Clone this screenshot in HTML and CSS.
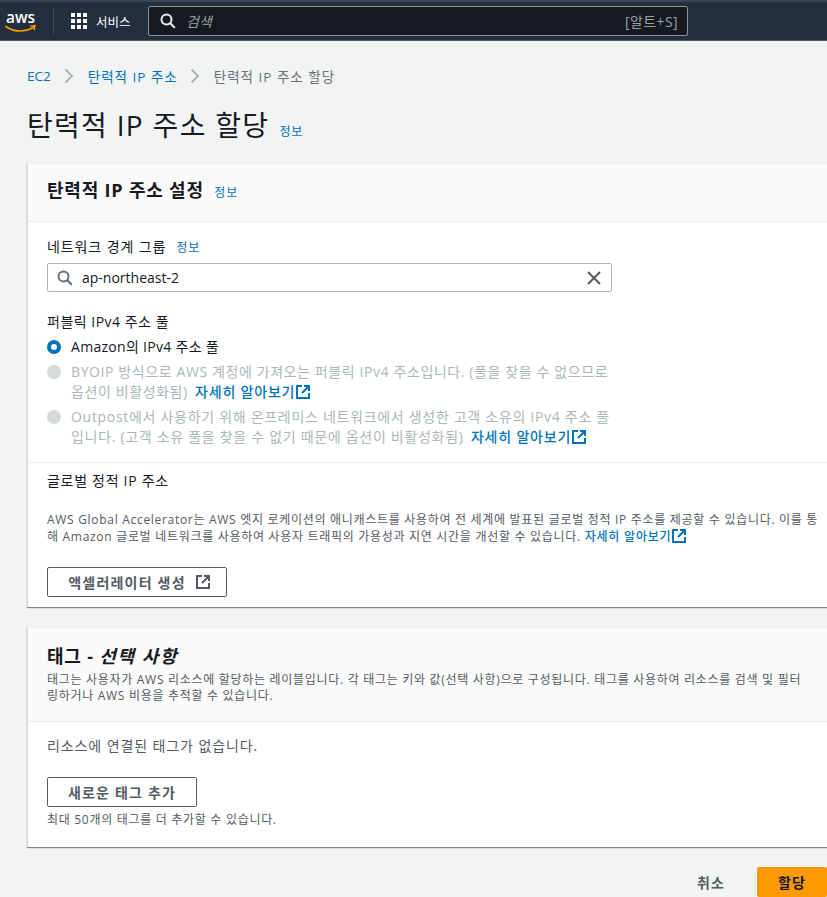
FILE: index.html
```html
<!DOCTYPE html>
<html lang="ko">
<head>
<meta charset="utf-8">
<title>탄력적 IP 주소 할당</title>
<link rel="stylesheet" href="styles.css">
</head>
<body>
<header class="topbar">
  <svg class="logo" width="33" height="34" viewBox="0 -4 33 34">
    <text x="1" y="15" class="logo-text" textLength="29" lengthAdjust="spacingAndGlyphs">aws</text>
    <path d="M1 18.500c4 3 9 4.500 14 4.500 4 0 9-1 13-3.400" fill="none" stroke="#ff9900" stroke-width="1.700" stroke-linecap="round"/>
    <path d="M25.500 18.300l4.500-.6-1 4.300" fill="none" stroke="#ff9900" stroke-width="1.500"/>
  </svg>
  <span class="topbar-sep"></span>
  <svg class="grid-icon" width="16" height="16" viewBox="0 0 16 16" fill="#fff">
    <rect width="4" height="4"/><rect x="6" width="4" height="4"/><rect x="12" width="4" height="4"/>
    <rect y="6" width="4" height="4"/><rect x="6" y="6" width="4" height="4"/><rect x="12" y="6" width="4" height="4"/>
    <rect y="12" width="4" height="4"/><rect x="6" y="12" width="4" height="4"/><rect x="12" y="12" width="4" height="4"/>
  </svg>
  <span class="services">서비스</span>
  <div class="search">
    <svg width="16" height="16" viewBox="0 0 16 16" fill="none" stroke="#eaeded" stroke-width="2"><circle cx="6.500" cy="6.500" r="5"/><path d="M10.200 10.200l4.600 4.600"/></svg>
    <span class="search-ph">검색</span>
    <span class="search-key">[알트+S]</span>
  </div>
</header>

<main class="page">
  <nav class="crumbs">
    <a class="link crumb-root">EC2</a>
    <svg class="crumb-sep" width="10" height="16" viewBox="0 0 10 16"><path d="M1.500 1.500L8 8l-6.500 6.500" fill="none" stroke="#aab7b8" stroke-width="2"/></svg>
    <a class="link">탄력적 IP 주소</a>
    <svg class="crumb-sep" width="10" height="16" viewBox="0 0 10 16"><path d="M1.500 1.500L8 8l-6.500 6.500" fill="none" stroke="#aab7b8" stroke-width="2"/></svg>
    <span class="crumb-current">탄력적 IP 주소 할당</span>
  </nav>

  <div class="title-row">
    <h1>탄력적 IP 주소 할당</h1>
    <a class="info">정보</a>
  </div>

  <section class="card">
    <div class="card-head">
      <h2>탄력적 IP 주소 설정 <a class="info info-h2">정보</a></h2>
    </div>
    <div class="card-body">
      <div class="label-row"><span class="label">네트워크 경계 그룹</span><a class="info">정보</a></div>
      <div class="input">
        <svg width="16" height="16" viewBox="0 0 16 16" fill="none" stroke="#687078" stroke-width="2"><circle cx="6.500" cy="6.500" r="5"/><path d="M10.200 10.200l4.600 4.600"/></svg>
        <span class="input-value">ap-northeast-2</span>
        <svg class="clear" width="16" height="16" viewBox="0 0 16 16" fill="none" stroke="#545b64" stroke-width="2"><path d="M2 2l12 12M14 2L2 14"/></svg>
      </div>
      <div class="label pool-label">퍼블릭 IPv4 주소 풀</div>
      <div class="radio">
        <span class="dot dot-on"></span>
        <span class="radio-text">Amazon의 IPv4 주소 풀</span>
      </div>
      <div class="radio radio-off">
        <span class="dot"></span>
        <span class="radio-text">BYOIP 방식으로 AWS 계정에 가져오는 퍼블릭 IPv4 주소입니다. (풀을 찾을 수 없으므로<br>옵션이 비활성화됨) <a class="link-strong">자세히 알아보기<svg class="ext" width="14" height="14" viewBox="0 0 14 14" fill="none" stroke="#0073bb" stroke-width="2"><path d="M6 1H1v12h12V8M8 1h5v5M13 1L6 8"/></svg></a></span>
      </div>
      <div class="radio radio-off radio-outpost">
        <span class="dot"></span>
        <span class="radio-text">Outpost에서 사용하기 위해 온프레미스 네트워크에서 생성한 고객 소유의 IPv4 주소 풀<br>입니다. (고객 소유 풀을 찾을 수 없기 때문에 옵션이 비활성화됨) <a class="link-strong">자세히 알아보기<svg class="ext" width="14" height="14" viewBox="0 0 14 14" fill="none" stroke="#0073bb" stroke-width="2"><path d="M6 1H1v12h12V8M8 1h5v5M13 1L6 8"/></svg></a></span>
      </div>
    </div>
    <div class="card-body global">
      <div class="label">글로벌 정적 IP 주소</div>
      <p class="desc">AWS Global Accelerator는 AWS 엣지 로케이션의 애니캐스트를 사용하여 전 세계에 발표된 글로벌 정적 IP 주소를 제공할 수 있습니다. 이를 통<br>해 Amazon 글로벌 네트워크를 사용하여 사용자 트래픽의 가용성과 지연 시간을 개선할 수 있습니다. <a class="link-strong">자세히 알아보기<svg class="ext" width="14" height="14" viewBox="0 0 14 14" fill="none" stroke="#0073bb" stroke-width="2"><path d="M6 1H1v12h12V8M8 1h5v5M13 1L6 8"/></svg></a></p>
      <button class="btn btn-accel">액셀러레이터 생성<svg width="14" height="14" viewBox="0 0 14 14" fill="none" stroke="#545b64" stroke-width="2"><path d="M6 1H1v12h12V8M8 1h5v5M13 1L6 8"/></svg></button>
    </div>
  </section>

  <section class="card card-tags">
    <div class="card-head tags-head">
      <h2>태그 - <em>선택 사항</em></h2>
      <p class="desc tags-desc">태그는 사용자가 AWS 리소스에 할당하는 레이블입니다. 각 태그는 키와 값(선택 사항)으로 구성됩니다. 태그를 사용하여 리소스를 검색 및 필터<br>링하거나 AWS 비용을 추적할 수 있습니다.</p>
    </div>
    <div class="card-body tags-body">
      <div class="empty">리소스에 연결된 태그가 없습니다.</div>
      <button class="btn btn-tag">새로운 태그 추가</button>
      <div class="hint">최대 50개의 태그를 더 추가할 수 있습니다.</div>
    </div>
  </section>

  <div class="actions">
    <button class="btn-cancel">취소</button>
    <button class="btn-primary">할당</button>
  </div>
</main>
</body>
</html>
```

FILE: styles.css
```css
* { box-sizing: border-box; }
html, body { margin: 0; padding: 0; }
body {
  width: 827px;
  height: 897px;
  overflow: hidden;
  background: #f2f3f3;
  font-family: "Open Sans", "Noto Sans CJK KR", sans-serif;
  font-size: 14px;
  color: #16191f;
}
.topbar {
  display: flex;
  align-items: center;
  height: 41px;
  padding: 0 0 0 5px;
  background: #232f3e;
  border-top: 2px solid #3a4452;
  border-bottom: 1px solid #545b64;
}
.logo { flex: none; }
.logo-text { font: 600 17px "Open Sans", sans-serif; fill: #fff; }
.topbar-sep { width: 1px; height: 26px; margin: 0 17px 0 15px; background: #414b58; }
.grid-icon { flex: none; }
.services { margin-left: 9px; color: #fff; font-size: 12.5px; width: 44px; }
.search {
  display: flex;
  align-items: center;
  width: 540px;
  height: 30px;
  margin-left: 8px;
  padding: 0 9px 0 11px;
  background: #16191f;
  border: 1px solid #879596;
  border-radius: 2px;
}
.search-ph { margin-left: 10px; color: #95a5a6; font-style: italic; }
.search-key { margin-left: auto; color: #95a5a6; font-size: 14px; letter-spacing: .4px; }

.page { padding-left: 27px; }
.crumbs { display: flex; align-items: center; height: 20px; margin-top: 25px; font-size: 13.5px; letter-spacing: 1px; }
.link { color: #0073bb; }
.crumb-root { margin-right: 1px; letter-spacing: 0; }
.crumb-sep { margin: 0 14px 0 12px; }
.crumb-current { color: #687078; }
.title-row { display: flex; align-items: baseline; gap: 10px; margin-top: 19px; height: 58px; }
h1 { margin: 0; font-size: 28px; font-weight: 400; line-height: 40px; letter-spacing: 1.3px; }
.info { color: #0073bb; font-size: 12px; font-weight: 400; letter-spacing: .8px; }
.card {
  width: 830px;
  background: #fff;
  border-top: 1px solid #eaeded;
  border-left: 1px solid #d5dbdb;
  box-shadow: 0 1px 1px 0 rgba(0,28,36,.5);
}
.card-head {
  height: 58px;
  padding: 12px 19px 0;
  background: #fafafa;
  border-bottom: 1px solid #eaeded;
}
h2 { margin: 0; font-size: 18px; font-weight: 700; line-height: 28px; letter-spacing: .8px; }
h2 em { font-style: italic; letter-spacing: 1.6px; }
.info-h2 { margin-left: 5px; }
.card-body { padding: 14px 19px 0; }
.label-row { display: flex; gap: 10px; align-items: center; height: 20px; padding-top: 1px; }
.label { font-size: 14px; line-height: 20px; letter-spacing: .7px; }
.label-row .label { letter-spacing: .9px; }
.input {
  display: flex;
  align-items: center;
  width: 565px;
  height: 29px;
  margin-top: 7px;
  padding: 0 9px;
  border: 1px solid #aab7b8;
  border-radius: 2px;
}
.input-value { margin-left: 9px; font-size: 14px; }
.clear { margin-left: auto; }
.pool-label { margin-top: 20px; letter-spacing: .5px; }
.radio { display: flex; gap: 10px; margin-top: 5px; line-height: 20px; font-size: 14px; white-space: nowrap; letter-spacing: .3px; }
.radio-off { margin-top: 5px; color: #aab7b8; letter-spacing: .6px; }
.radio-outpost { letter-spacing: .7px; }
.dot { flex: none; width: 14px; height: 14px; margin-top: 3px; border-radius: 50%; background: #d5dbdb; }
.dot-on { background: #fff; border: 4px solid #0073bb; }
.link-strong { color: #0073bb; font-weight: 500; letter-spacing: .8px; }
.radio-off .link-strong { margin-left: 3px; }
.ext { margin-left: 1px; vertical-align: -2px; }
.global { margin-top: 15px; padding-top: 8px; height: 145px; border-top: 1px solid #eaeded; }
.desc { margin: 0; color: #545b64; font-size: 12px; line-height: 17px; letter-spacing: .7px; white-space: nowrap; }
.global .desc { margin-top: 20px; }
.btn {
  display: flex;
  align-items: center;
  justify-content: center;
  height: 30px;
  background: #fff;
  border: 1px solid #545b64;
  border-radius: 2px;
  color: #545b64;
  font: 700 14px "Open Sans", "Noto Sans CJK KR", sans-serif;
  letter-spacing: 1.2px;
}
.btn-accel { gap: 10px; width: 180px; margin-top: 22px; padding: 0 0 0 4px; }
.card-tags { margin-top: 20px; }
.tags-head { height: 94px; padding-top: 14px; }
.tags-desc { line-height: 16px; margin-top: 2px; }
.tags-body { height: 125px; padding-top: 13px; }
.empty { color: #545b64; font-size: 14px; line-height: 21px; letter-spacing: .9px; }
.btn-tag { width: 150px; margin-top: 21px; }
.hint { margin-top: 5px; color: #545b64; font-size: 12px; line-height: 16px; letter-spacing: .7px; }
.actions { display: flex; justify-content: flex-end; align-items: center; height: 30px; margin-top: 20px; }
.btn-cancel { width: 60px; padding: 0; background: none; border: 0; color: #545b64; font: 700 14px "Open Sans", "Noto Sans CJK KR", sans-serif; letter-spacing: 1px; }
.btn-primary { width: 70px; height: 30px; margin-left: 16px; padding: 0; background: #ff9900; border: 0; border-radius: 2px; color: #16191f; font: 700 14px "Open Sans", "Noto Sans CJK KR", sans-serif; letter-spacing: 1px; }
```
